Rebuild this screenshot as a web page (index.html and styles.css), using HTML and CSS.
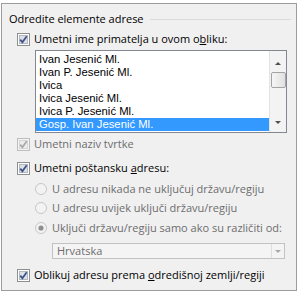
FILE: index.html
```html
<!DOCTYPE html>
<html lang="hr">
<head>
    <meta charset="UTF-8">
    <title>Odredite elemente adrese</title>
    <link rel="stylesheet" href="styles.css">
</head>
<body>
    <div class="dialog">
        <div class="group-head">
            <span>Odredite elemente adrese</span>
            <span class="rule"></span>
        </div>

        <label class="row opt-name">
            <svg class="box" viewBox="0 0 13 13"><rect class="outer" x="0.5" y="0.5" width="12" height="12"/><rect class="inner" x="2.5" y="2.5" width="8" height="8"/><path class="tick" d="M3.3 6.6l2.1 2.6 4.3-6"/></svg>
            <span>Umetni ime primatelja u ovom o<u>b</u>liku:</span>
        </label>

        <div class="listbox">
            <ul class="items">
                <li>Ivan Jesenić Ml.</li>
                <li>Ivan P. Jesenić Ml.</li>
                <li>Ivica</li>
                <li>Ivica Jesenić Ml.</li>
                <li>Ivica P. Jesenić Ml.</li>
                <li class="selected">Gosp. Ivan Jesenić Ml.</li>
            </ul>
            <div class="scrollbar">
                <div class="sb-btn sb-top"><span class="arrow up"></span></div>
                <div class="thumb"></div>
                <div class="sb-btn sb-end"><span class="arrow down"></span></div>
            </div>
        </div>

        <label class="row opt-company disabled">
            <svg class="box" viewBox="0 0 13 13"><rect class="outer" x="0.5" y="0.5" width="12" height="12"/><rect class="inner" x="2.5" y="2.5" width="8" height="8"/><path class="tick" d="M3.3 6.6l2.1 2.6 4.3-6"/></svg>
            <span>Umetni naziv tvrtke</span>
        </label>

        <label class="row opt-address">
            <svg class="box" viewBox="0 0 13 13"><rect class="outer" x="0.5" y="0.5" width="12" height="12"/><rect class="inner" x="2.5" y="2.5" width="8" height="8"/><path class="tick" d="M3.3 6.6l2.1 2.6 4.3-6"/></svg>
            <span>Umetni poštansku <u>a</u>dresu:</span>
        </label>

        <label class="radio radio-never">
            <svg class="dot" viewBox="0 0 12 12"><circle class="ring" cx="6" cy="6" r="5.5"/></svg>
            <span>U adresu nikada ne uključuj državu/regiju</span>
        </label>
        <label class="radio radio-always">
            <svg class="dot" viewBox="0 0 12 12"><circle class="ring" cx="6" cy="6" r="5.5"/></svg>
            <span>U adresu uvijek uključi državu/regiju</span>
        </label>
        <label class="radio radio-diff">
            <svg class="dot" viewBox="0 0 12 12"><circle class="ring" cx="6" cy="6" r="5.5"/><circle class="core" cx="6" cy="6" r="2.6"/></svg>
            <span>Uključi državu/regiju samo ako su različiti od:</span>
        </label>

        <div class="combo">
            <span class="combo-text">Hrvatska</span>
            <span class="combo-btn"><span class="arrow down"></span></span>
        </div>

        <label class="row opt-format">
            <svg class="box" viewBox="0 0 13 13"><rect class="outer" x="0.5" y="0.5" width="12" height="12"/><rect class="inner" x="2.5" y="2.5" width="8" height="8"/><path class="tick" d="M3.3 6.6l2.1 2.6 4.3-6"/></svg>
            <span>Oblikuj adresu prema <u>o</u>dredišnoj zemlji/regiji</span>
        </label>
    </div>
</body>
</html>
```

FILE: styles.css
```css
* {
    margin: 0;
    padding: 0;
    box-sizing: border-box;
}

body {
    background: #fff;
    font-family: "Open Sans", "Noto Sans", sans-serif;
    font-size: 11px;
    color: #000;
}

.dialog {
    margin: 3px 4px 3px 1px;
    height: 288px;
    border: 1px solid #9c9c9c;
    background: #f0f0f0;
    padding: 7px 0 0 7px;
    display: flex;
    flex-direction: column;
}

.group-head {
    display: flex;
    align-items: center;
    height: 16px;
    line-height: 16px;
}

.group-head .rule {
    flex: 1;
    height: 1px;
    background: #dadada;
    margin: 0 5px 0 6px;
}

/* checkbox rows */
.row {
    display: flex;
    align-items: center;
    gap: 4px;
    height: 16px;
    line-height: 16px;
    margin-left: 8px;
}

.opt-name { margin-top: 4px; }
.opt-company { margin-top: 3px; }
.opt-address { margin-top: 8px; }
.opt-format { margin-top: 8px; }

.box {
    width: 13px;
    height: 13px;
    flex: none;
}

.box .outer { fill: #fff; stroke: #8e8f8f; }
.box .inner { fill: #dde1e6; stroke: #b3b8bf; }
.box .tick { fill: none; stroke: #3c5288; stroke-width: 1.8; }

.disabled { color: #6d6d6d; }
.disabled .box .outer { fill: #f4f4f4; stroke: #bdbdbd; }
.disabled .box .inner { fill: #ececec; stroke: #d6d6d6; }
.disabled .box .tick { stroke: #a9a9a9; }

/* list */
.listbox {
    display: flex;
    height: 83px;
    margin: 3px 9px 0 26px;
    border: 1px solid #828790;
    background: #fff;
}

.items {
    flex: 1;
    list-style: none;
    padding-top: 2px;
    font-family: "Liberation Sans", Arial, sans-serif;
    font-size: 11.3px;
}

.items li {
    height: 13px;
    line-height: 13px;
    padding-left: 3px;
    white-space: nowrap;
}

.items li.selected {
    background: #3399ff;
    color: #fff;
}

.scrollbar {
    width: 17px;
    display: flex;
    flex-direction: column;
    align-items: center;
    background: #f3f3f3;
    border-left: 1px solid #e2e2e2;
}

.sb-btn {
    height: 19px;
    display: flex;
    align-items: center;
    justify-content: center;
}

.sb-top {
    height: 21px;
    padding-top: 3px;
}

.sb-end { margin-top: auto; }

.thumb {
    width: 15px;
    height: 16px;
    border: 1px solid #a3a3a3;
    border-radius: 2px;
    background: linear-gradient(90deg, #f6f6f6, #e0e0e0);
}

.arrow {
    width: 0;
    height: 0;
    border-left: 3px solid transparent;
    border-right: 3px solid transparent;
}

.arrow.up { border-bottom: 3px solid #505050; }
.arrow.down { border-top: 3px solid #505050; }

/* radios */
.radio {
    display: flex;
    align-items: center;
    gap: 5px;
    height: 16px;
    line-height: 16px;
    margin-left: 26px;
    color: #6d6d6d;
}

.radio-never { margin-top: 5px; }
.radio-always { margin-top: 3px; }
.radio-diff { margin-top: 4px; }

.dot {
    width: 12px;
    height: 12px;
    flex: none;
}

.dot .ring { fill: #f3f3f3; stroke: #c6c6c6; }
.dot .core { fill: #8f8f8f; }

/* combo */
.combo {
    display: flex;
    height: 16px;
    margin: 7px 11px 0 43px;
    border: 1px solid #c2c2c2;
    background: #f4f4f4;
    color: #6d6d6d;
}

.combo-text {
    flex: 1;
    line-height: 14px;
    padding-left: 4px;
}

.combo-btn {
    width: 13px;
    display: flex;
    align-items: center;
    justify-content: center;
    border-left: 1px solid #dedede;
}

.combo-btn .arrow.down { border-top-color: #a8a8a8; }
```
